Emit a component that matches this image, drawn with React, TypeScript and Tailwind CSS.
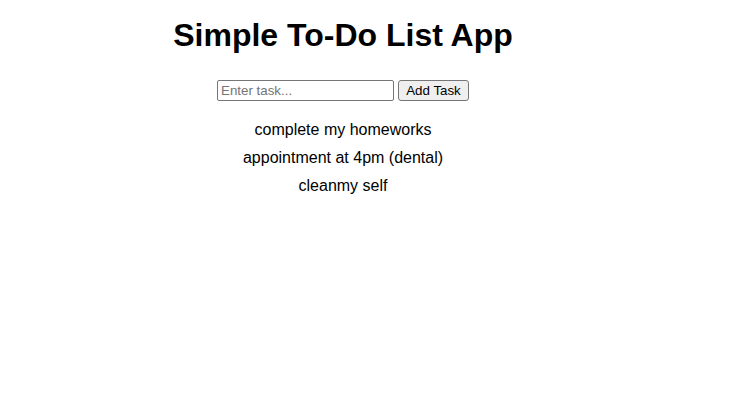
import { useState } from "react";

export default function App() {
  const [tasks, setTasks] = useState<string[]>([
    "complete my homeworks",
    "appointment at 4pm (dental)",
    "cleanmy self",
  ]);
  const [text, setText] = useState("");

  const addTask = () => {
    if (!text.trim()) return;
    setTasks([...tasks, text.trim()]);
    setText("");
  };

  return (
    <div className="w-[686px] flex flex-col items-center font-['Liberation_Sans',Arial,sans-serif] text-black bg-white">
      <h1 className="mt-[17px] text-[32px] leading-[37px] font-bold">Simple To-Do List App</h1>

      <div className="mt-[26px] flex items-center">
        <input
          value={text}
          onChange={(e) => setText(e.target.value)}
          placeholder="Enter task..."
          className="h-[21px] w-[177px] border border-[#767676] rounded-[2px] px-[3px] text-[13.33px] placeholder:text-[#757575] outline-none"
        />
        <button
          onClick={addTask}
          className="ml-[4px] h-[21px] w-[71px] border border-[#767676] rounded-[3px] bg-[#efefef] text-[13.33px] text-black"
        >
          Add Task
        </button>
      </div>

      <ul className="mt-[15px] flex flex-col items-center">
        {tasks.map((task, idx) => (
          <li key={idx} className="text-[16px] leading-[28px]">
            {task}
          </li>
        ))}
      </ul>
    </div>
  );
}
